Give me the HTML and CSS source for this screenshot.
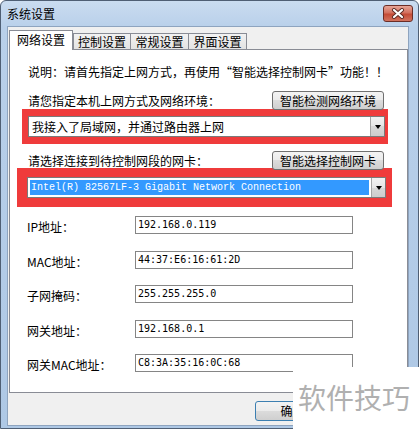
FILE: index.html
```html
<!DOCTYPE html>
<html lang="zh-CN">
<head>
    <meta charset="UTF-8">
    <title>系统设置</title>
    <link rel="stylesheet" href="styles.css">
</head>
<body>
<div class="window">
    <div class="titlebar">
        <span class="title">系统设置</span>
        <button class="close-btn">
            <svg width="14" height="11" viewBox="0 0 14 11">
                <path d="M3 2 L11 9 M11 2 L3 9" stroke="#5a2a24" stroke-width="4" stroke-linecap="round"/>
                <path d="M3 2 L11 9 M11 2 L3 9" stroke="#fff" stroke-width="2.2" stroke-linecap="round"/>
            </svg>
        </button>
    </div>
    <div class="client">
        <div class="tabs">
            <div class="tab active">网络设置</div>
            <div class="tab">控制设置</div>
            <div class="tab">常规设置</div>
            <div class="tab">界面设置</div>
        </div>
        <div class="panel">
            <p class="note">说明：请首先指定上网方式，再使用“智能选择控制网卡”功能！！</p>
            <div class="row-head">
                <span>请您指定本机上网方式及网络环境：</span>
                <button class="btn btn-wide">智能检测网络环境</button>
            </div>
            <div class="mark mark-env">
                <div class="combo combo-env">
                    <span class="combo-text">我接入了局域网，并通过路由器上网</span>
                    <span class="combo-arrow"></span>
                </div>
            </div>
            <div class="row-head row-nic">
                <span>请选择连接到待控制网段的网卡：</span>
                <button class="btn btn-wide">智能选择控制网卡</button>
            </div>
            <div class="mark mark-nic">
                <div class="combo combo-nic">
                    <span class="combo-text selected">Intel(R) 82567LF-3 Gigabit Network Connection</span>
                    <span class="combo-arrow"></span>
                </div>
            </div>
            <div class="fields">
                <div class="field"><label>IP地址：</label><div class="value">192.168.0.119</div></div>
                <div class="field"><label>MAC地址：</label><div class="value">44:37:E6:16:61:2D</div></div>
                <div class="field"><label>子网掩码：</label><div class="value">255.255.255.0</div></div>
                <div class="field"><label>网关地址：</label><div class="value">192.168.0.1</div></div>
                <div class="field"><label>网关MAC地址：</label><div class="value">C8:3A:35:16:0C:68</div></div>
            </div>
        </div>
        <div class="footer">
            <button class="btn btn-ok">确定</button>
        </div>
    </div>
    <div class="watermark">软件技巧</div>
</div>
</body>
</html>
```

FILE: styles.css
```css
body {
    margin: 0;
    background-color: #fff;
    font-family: "Noto Sans CJK SC", sans-serif;
    font-size: 12px;
    color: #000;
}
.window {
    position: relative;
    width: 419px;
    height: 429px;
    box-sizing: border-box;
    border: 1px solid #4f5f74;
    border-radius: 6px 6px 0 0;
    background: linear-gradient(#cadcf0, #b9d0ea 26px, #aec8e5);
    padding: 0 9px 2px 6px;
}
.titlebar {
    height: 25px;
    display: flex;
    justify-content: space-between;
    align-items: flex-start;
}
.title {
    margin-top: 5px;
    line-height: 16px;
    color: #000;
}
.close-btn {
    width: 30px;
    height: 17px;
    margin: 4px -4px 0 0;
    padding: 0;
    border: 1px solid #6b2d26;
    border-radius: 3px;
    background: linear-gradient(#e6a597, #d3705e 45%, #c44b36 55%, #d2735f);
    display: flex;
    align-items: center;
    justify-content: center;
}
.client {
    height: 400px;
    box-sizing: border-box;
    border: 1px solid #8ea4bf;
    background-color: #f0f0f0;
}
.tabs {
    position: relative;
    z-index: 1;
    display: flex;
    align-items: flex-end;
    height: 20px;
    margin: 3px 0 -1px 1px;
}
.tab {
    box-sizing: border-box;
    height: 16px;
    margin-bottom: 1px;
    border: 1px solid #898c95;
    border-bottom: none;
    background: linear-gradient(#f2f2f2, #e3e3e3);
    line-height: 15px;
    text-align: center;
    width: 59px;
    margin-left: -1px;
}
.tab.active {
    width: 64px;
    height: 20px;
    margin: 0;
    background: #fff;
    line-height: 18px;
}
.tab.active + .tab {
    width: 58px;
    margin-left: 0;
}
.panel {
    width: 399px;
    height: 344px;
    box-sizing: border-box;
    margin-left: 1px;
    border: 1px solid #898c95;
    background-color: #fff;
    padding: 14px 0 0 18px;
}
.note {
    margin: 0;
    line-height: 16px;
}
.row-head {
    width: 356px;
    height: 19px;
    margin-top: 11px;
    display: flex;
    justify-content: space-between;
    align-items: center;
}
.row-nic {
    margin-top: 7px;
}
.btn {
    height: 19px;
    padding: 0;
    border: 1px solid #707070;
    border-radius: 3px;
    background: linear-gradient(#f3f3f3, #ebebeb 50%, #dcdcdc 50%, #cfcfcf);
    font-family: "Noto Sans CJK SC", sans-serif;
    font-size: 12px;
    line-height: 16px;
    color: #000;
}
.btn-wide {
    width: 112px;
}
.mark {
    width: fit-content;
    border-style: solid;
    border-color: #ef3b3b;
}
.mark-env {
    margin: -1px 0 0 -6px;
    border-width: 7px 3px 7px 6px;
}
.mark-nic {
    margin: -2px 0 0 -11px;
    border-width: 9px 6px 9px 10px;
}
.combo {
    height: 21px;
    box-sizing: border-box;
    border: 1px solid #7a7a7a;
    background-color: #fff;
    display: flex;
}
.combo-env {
    width: 357px;
}
.combo-nic {
    width: 359px;
}
.combo-text {
    flex: 1;
    padding-left: 3px;
    line-height: 19px;
    white-space: nowrap;
    overflow: hidden;
}
.combo-text.selected {
    margin: 2px;
    padding-left: 1px;
    background-color: #3399ff;
    color: #fff;
    font-family: "Liberation Mono", monospace;
    font-size: 10px;
    line-height: 15px;
}
.combo-arrow {
    width: 13px;
    border-left: 1px solid #a5a5a5;
    background: linear-gradient(#f2f2f2, #e6e6e6 50%, #d8d8d8 50%, #cdcdcd);
    display: flex;
    align-items: center;
    justify-content: center;
}
.combo-arrow::after {
    content: "";
    border-left: 3.5px solid transparent;
    border-right: 3.5px solid transparent;
    border-top: 4px solid #000;
}
.fields {
    margin: 9px 0 0 -1px;
    display: flex;
    flex-direction: column;
    gap: 16.5px;
}
.field {
    display: flex;
    height: 18px;
}
.field label {
    width: 108px;
    padding-top: 2px;
    line-height: 18px;
}
.value {
    width: 218px;
    height: 18px;
    box-sizing: border-box;
    border: 1px solid #858585;
    padding-left: 2px;
    font-family: "DejaVu Sans Mono", monospace;
    font-size: 10px;
    line-height: 16px;
}
.footer {
    margin-top: 8px;
    padding-left: 247px;
}
.btn-ok {
    width: 75px;
    height: 20px;
    border-color: #3c7fb1;
}
.watermark {
    position: absolute;
    left: 292px;
    top: 366px;
    width: 127px;
    height: 63px;
    box-sizing: border-box;
    padding: 10px 0 0 5px;
    background-color: #fff;
    color: #b0b0b0;
    font-size: 28px;
    line-height: 40px;
    white-space: nowrap;
}
```
